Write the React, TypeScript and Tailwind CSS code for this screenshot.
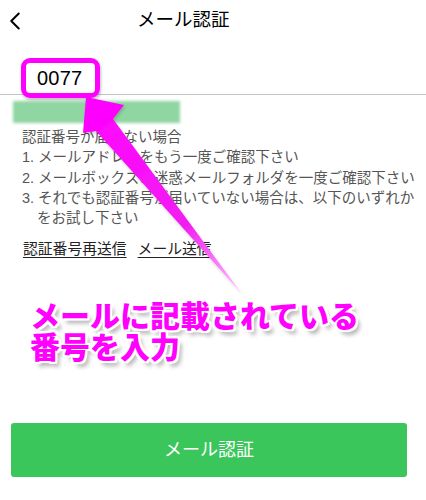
import { ChevronLeft } from 'lucide-react';

const jp = { fontFamily: '"Liberation Sans", "Noto Sans CJK JP", sans-serif' };

const notes = [
  '1. メールアドレスをもう一度ご確認下さい',
  '2. メールボックスの迷惑メールフォルダを一度ご確認下さい',
  '3. それでも認証番号が届いていない場合は、以下のいずれか',
];

export default function App() {
  return (
    <div className="relative w-[426px] h-[500px] bg-white overflow-hidden flex flex-col text-black" style={jp}>
      {/* header */}
      <div className="h-[41px] flex items-center shrink-0">
        <ChevronLeft className="w-[30px] h-[30px] ml-[0px] text-black" strokeWidth={1.6} />
        <h1 className="ml-[107px] text-[18.5px] leading-none">メール認証</h1>
      </div>

      {/* code input */}
      <div className="h-[54px] border-b border-[#c4c4c4] flex items-end pb-[4px] pl-[37px] shrink-0">
        <span className="text-[20px] leading-[24px] tracking-[0.2px]">0077</span>
      </div>

      {/* blurred address */}
      <div className="mt-[6px] ml-[13px] w-[167px] h-[22px] bg-[#8fd6a2] blur-[1.5px] shrink-0" />

      {/* help text */}
      <div className="mt-[4px] pl-[22px] text-[14.5px] leading-[20.3px] text-[#555]">
        <p>認証番号が届かない場合</p>
        {notes.map(n => (
          <p key={n}>{n}</p>
        ))}
        <p className="pl-[15px]">をお試し下さい</p>
      </div>

      <div className="mt-[11px] pl-[23px] flex gap-[11px] text-[14.8px] leading-[20px] text-[#222]">
        <span className="underline underline-offset-[3px] decoration-1">認証番号再送信</span>
        <span className="underline underline-offset-[3px] decoration-1">メール送信</span>
      </div>

      {/* submit */}
      <button className="mt-auto mb-[23px] ml-[11px] w-[396px] h-[54px] bg-[#3bc65c] rounded-[3px] text-white text-[18px] shrink-0">
        メール認証
      </button>

      {/* annotation: highlight box */}
      <div className="absolute left-[21px] top-[58px] w-[79px] h-[40px] border-[5px] border-[#ff00ff] rounded-[9px] shadow-[1px_2px_3px_rgba(0,0,0,0.25)]" />

      {/* annotation: arrow */}
      <svg className="absolute left-0 top-0 pointer-events-none" width="426" height="500">
        <defs>
          <linearGradient id="arr" x1="86" y1="97" x2="242" y2="294" gradientUnits="userSpaceOnUse">
            <stop offset="0" stopColor="#ff00ff" />
            <stop offset="0.65" stopColor="#f21ef2" />
            <stop offset="1" stopColor="#ffc8ff" />
          </linearGradient>
          <filter id="sh" x="-20%" y="-20%" width="140%" height="140%">
            <feDropShadow dx="1" dy="2" stdDeviation="1.5" floodColor="#000" floodOpacity="0.18" />
          </filter>
        </defs>
        <polygon
          points="86,97 124,105 113,119 242,294 96,131 83,133"
          fill="url(#arr)"
          filter="url(#sh)"
        />
      </svg>

      {/* annotation: caption */}
      <div
        className="absolute left-[30px] top-[299px] text-[30px] leading-[31px] font-black text-[#ff00ff] tracking-[0px]"
        style={{
          fontFamily: '"Noto Sans CJK JP", sans-serif',
          textShadow:
            '2px 0 0 #fff, -2px 0 0 #fff, 0 2px 0 #fff, 0 -2px 0 #fff, 2px 2px 0 #fff, -2px -2px 0 #fff, 2px -2px 0 #fff, -2px 2px 0 #fff, 4px 5px 4px rgba(0,0,0,0.3)',
        }}
      >
        <p>メールに記載されている</p>
        <p>番号を入力</p>
      </div>
    </div>
  );
}
